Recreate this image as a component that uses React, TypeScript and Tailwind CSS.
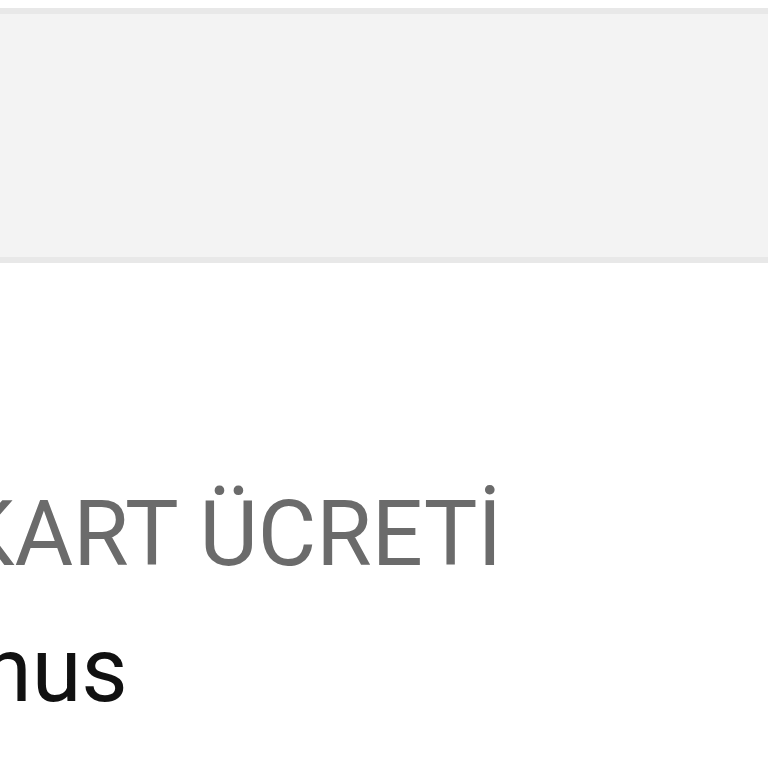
const App = () => {
  return (
    <div className="h-[768px] w-[768px] overflow-hidden bg-white font-['Roboto',sans-serif]">
      <div className="h-[8px] bg-white" />
      <div className="h-[255px] border-y-[6px] border-[#e8e8e8] bg-[#f3f3f3]" />
      <div className="flex flex-col pt-[227px]">
        <div className="-ml-[42px] whitespace-nowrap text-[90px] leading-none text-[#6b6b6b]">
          KART ÜCRETİ
        </div>
        <div className="-ml-[18px] mt-[46px] whitespace-nowrap text-[90px] leading-none text-[#111111]">
          nus
        </div>
      </div>
    </div>
  );
};

export default App;
